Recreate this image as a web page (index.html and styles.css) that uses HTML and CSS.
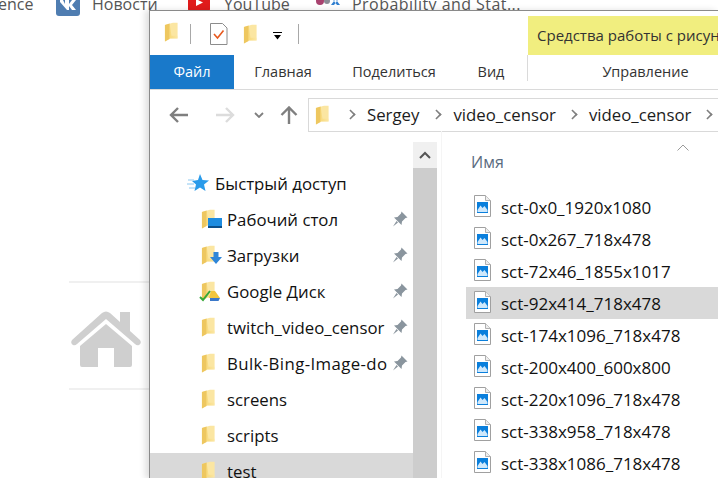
FILE: index.html
```html
<!DOCTYPE html>
<html lang="en">

<head>
  <meta charset="UTF-8">
  <title>video_censor</title>
  <link rel="stylesheet" href="styles.css">
</head>

<body>
  <svg class="defs" width="0" height="0">
    <defs>
      <linearGradient id="fold" x1="0" y1="0" x2="1" y2="0">
        <stop offset="0" stop-color="#f6d365" />
        <stop offset="1" stop-color="#fbe7a6" />
      </linearGradient>
      <symbol id="folder" viewBox="0 0 16 22">
        <path d="M1 3.500 L9.500 1 H14.500 V18 H6 L1 21 Z" fill="#fbe6a2" />
        <path d="M1 3.500 L6 2 V18.500 L1 21 Z" fill="#eec75f" />
        <path d="M6 2 V18 H14.500 V15 H8 Z" fill="url(#fold)" opacity=".6" />
      </symbol>
      <symbol id="pin" viewBox="0 0 16 16">
        <path d="M9.500 0.500 L15.500 6.500 L13.500 7 L10 10.500 L9.500 14 L2 6.500 L5.500 6 L9 2.500 Z M4.500 10 L6 11.500 L1 15.500 Z" fill="#8a959e" />
      </symbol>
      <symbol id="pic" viewBox="0 0 17 22">
        <path d="M0.500 0.500 H11.500 L16.500 5.500 V21.500 H0.500 Z" fill="#fff" stroke="#a0a0a0" />
        <path d="M11.500 0.500 V5.500 H16.500" fill="#eee" stroke="#b0b0b0" />
        <rect x="3" y="7" width="11" height="11" fill="#0a7fdc" />
        <path d="M3.500 15 L6.500 10.500 L8.500 13 L10.500 11 L13.500 15 V17 H3.500 Z" fill="#cfe8fb" />
      </symbol>
    </defs>
  </svg>

  <div class="bookmarks">
    <span class="bm bm-cut">ence</span>
    <span class="bm bm-news">
      <svg class="vk" width="24" height="24" viewBox="0 0 24 24">
        <rect width="24" height="24" rx="3" fill="#4f7db1" />
        <path d="M4 8 H7 L9 12 V8 H13 V12 L16 8 H20 L16 13 L20 18 H16 L13 14 V18 H11 L4 10 Z" fill="#fff" />
      </svg>
      Новости
    </span>
    <span class="bm bm-yt">
      <svg width="22" height="16" viewBox="0 0 22 16">
        <rect width="22" height="16" rx="3" fill="#e01b1b" />
        <path d="M8 3 L15 6.500 L8 10 Z" fill="#fff" />
      </svg>
      YouTube
    </span>
    <span class="bm bm-edx">
      <svg width="26" height="14" viewBox="0 0 26 14">
        <circle cx="5" cy="4" r="4" fill="#a8426f" />
        <circle cx="12" cy="4" r="3" fill="#8b8b95" />
        <path d="M16 0 H19 L25 8 H22 Z M25 0 H22 L16 8 H19 Z" fill="#2f7fd0" />
      </svg>
      Probability and Stat...
    </span>
  </div>

  <div class="home-strip">
    <svg width="72" height="58" viewBox="0 0 72 58">
      <path d="M50 2 H60 V21 L70 30 Q72 33 69 35 Q67 36 65 34 L36 9 L7 34 Q5 36 3 35 Q0 33 2 30 L32 3 Q36 0 40 3 L50 12 Z" fill="#cfcfcf" />
      <path d="M36 14 L62 36 V55 Q62 57 60 57 H44 V38 H28 V57 H12 Q10 57 10 55 V36 Z" fill="#cfcfcf" />
    </svg>
  </div>

  <div class="explorer">
    <div class="qat">
      <svg class="qat-folder" width="15" height="22"><use href="#folder" /></svg>
      <span class="qat-sep"></span>
      <svg class="qat-check" width="18" height="22" viewBox="0 0 18 22">
        <path d="M0.500 0.500 H12.500 L17 5 V21.500 H0.500 Z" fill="#fff" stroke="#8c8c8c" />
        <path d="M4 11 L7.500 15 L13.500 7.500" fill="none" stroke="#e8591e" stroke-width="1.600" />
      </svg>
      <svg class="qat-folder2" width="15" height="22"><use href="#folder" /></svg>
      <svg class="qat-drop" width="9" height="8" viewBox="0 0 9 8">
        <path d="M0 0 H9 V1 H0 Z M1 3 H8 L4.500 7.500 Z" fill="#000" />
      </svg>
      <span class="qat-sep qat-sep-last"></span>
      <div class="tools-head">Средства работы с рисун</div>
    </div>

    <div class="tabs">
      <div class="tab tab-file">Файл</div>
      <div class="tab tab-home">Главная</div>
      <div class="tab tab-share">Поделиться</div>
      <div class="tab tab-view">Вид</div>
      <div class="tab tab-manage">Управление</div>
    </div>

    <div class="addr-row">
      <svg class="nav-btn back" width="20" height="16" viewBox="0 0 20 16">
        <path d="M9 1 L2 8 L9 15 M2 8 H19" fill="none" stroke="#7f7f7f" stroke-width="2.400" />
      </svg>
      <svg class="nav-btn fwd" width="20" height="16" viewBox="0 0 20 16">
        <path d="M11 1 L18 8 L11 15 M18 8 H1" fill="none" stroke="#dcdcdc" stroke-width="2.400" />
      </svg>
      <svg class="nav-btn down" width="10" height="6" viewBox="0 0 10 6">
        <path d="M1 1 L5 5 L9 1" fill="none" stroke="#7f7f7f" stroke-width="1.800" />
      </svg>
      <svg class="nav-btn up" width="18" height="18" viewBox="0 0 18 18">
        <path d="M1.500 9 L9 1.500 L16.500 9 M9 2 V18" fill="none" stroke="#7f7f7f" stroke-width="2.400" />
      </svg>
      <div class="addr-box">
        <svg class="addr-folder" width="15" height="22"><use href="#folder" /></svg>
        <span class="crumb-arrow"></span><span class="crumb crumb-first">Sergey</span>
        <span class="crumb-arrow"></span><span class="crumb">video_censor</span>
        <span class="crumb-arrow"></span><span class="crumb">video_censor</span>
        <span class="crumb-arrow"></span>
      </div>
    </div>

    <div class="panes">
      <div class="nav-pane">
        <div class="nav-item nav-quick">
          <svg class="star" width="22" height="18" viewBox="0 0 22 18">
            <path d="M13 0 L15.500 6 L22 6.500 L17 10.500 L18.500 17 L13 13.500 L7.500 17 L9 10.500 L5 7 L11 6 Z" fill="#2a9bea" />
            <path d="M1 6 H7 M0 10 H7 M2 14 H8" stroke="#8cc8f0" stroke-width="1" />
          </svg>
          Быстрый доступ
        </div>
        <div class="nav-item">
          <span class="ico">
            <svg width="15" height="22"><use href="#folder" /></svg>
            <svg class="badge badge-desk" width="14" height="10" viewBox="0 0 14 10">
              <rect width="14" height="10" fill="#1d8ce0" />
              <rect y="8" width="14" height="2" fill="#0b4f8a" />
            </svg>
          </span>
          <span class="label">Рабочий стол</span>
          <svg class="pin" width="16" height="16"><use href="#pin" /></svg>
        </div>
        <div class="nav-item">
          <span class="ico">
            <svg width="15" height="22"><use href="#folder" /></svg>
            <svg class="badge badge-down" width="12" height="12" viewBox="0 0 12 12">
              <path d="M3.500 0 H8.500 V5 H12 L6 12 L0 5 H3.500 Z" fill="#2f86d8" />
            </svg>
          </span>
          <span class="label">Загрузки</span>
          <svg class="pin" width="16" height="16"><use href="#pin" /></svg>
        </div>
        <div class="nav-item">
          <span class="ico">
            <svg width="15" height="22"><use href="#folder" /></svg>
            <svg class="badge badge-drive" width="22" height="15" viewBox="0 0 22 15">
              <path d="M12 4 H16 L21 11 H10 Z" fill="#f2c53d" />
              <path d="M11 11 H21 L19.500 14 H11 Z" fill="#3b78c9" />
              <path d="M1 10 L4 13 L11 4" fill="none" stroke="#35a83a" stroke-width="2" />
            </svg>
          </span>
          <span class="label">Google Диск</span>
          <svg class="pin" width="16" height="16"><use href="#pin" /></svg>
        </div>
        <div class="nav-item">
          <span class="ico"><svg width="15" height="22"><use href="#folder" /></svg></span>
          <span class="label">twitch_video_censor</span>
          <svg class="pin" width="16" height="16"><use href="#pin" /></svg>
        </div>
        <div class="nav-item">
          <span class="ico"><svg width="15" height="22"><use href="#folder" /></svg></span>
          <span class="label label-wide">Bulk-Bing-Image-do</span>
          <svg class="pin" width="16" height="16"><use href="#pin" /></svg>
        </div>
        <div class="nav-item">
          <span class="ico"><svg width="15" height="22"><use href="#folder" /></svg></span>
          <span class="label">screens</span>
        </div>
        <div class="nav-item">
          <span class="ico"><svg width="15" height="22"><use href="#folder" /></svg></span>
          <span class="label">scripts</span>
        </div>
        <div class="nav-item nav-selected">
          <span class="ico"><svg width="15" height="22"><use href="#folder" /></svg></span>
          <span class="label">test</span>
        </div>
      </div>

      <div class="scrollbar">
        <div class="scroll-up">
          <svg width="12" height="8" viewBox="0 0 12 8">
            <path d="M1 7 L6 2 L11 7" fill="none" stroke="#555" stroke-width="2" />
          </svg>
        </div>
        <div class="scroll-thumb"></div>
      </div>

      <div class="files">
        <svg class="sort-caret" width="12" height="7" viewBox="0 0 12 7">
          <path d="M0.500 6.500 L6 1 L11.500 6.500" fill="none" stroke="#9a9a9a" />
        </svg>
        <div class="col-name">Имя</div>
        <div class="file"><svg width="17" height="22"><use href="#pic" /></svg>sct-0x0_1920x1080</div>
        <div class="file"><svg width="17" height="22"><use href="#pic" /></svg>sct-0x267_718x478</div>
        <div class="file"><svg width="17" height="22"><use href="#pic" /></svg>sct-72x46_1855x1017</div>
        <div class="file file-selected"><svg width="17" height="22"><use href="#pic" /></svg>sct-92x414_718x478</div>
        <div class="file"><svg width="17" height="22"><use href="#pic" /></svg>sct-174x1096_718x478</div>
        <div class="file"><svg width="17" height="22"><use href="#pic" /></svg>sct-200x400_600x800</div>
        <div class="file"><svg width="17" height="22"><use href="#pic" /></svg>sct-220x1096_718x478</div>
        <div class="file"><svg width="17" height="22"><use href="#pic" /></svg>sct-338x958_718x478</div>
        <div class="file"><svg width="17" height="22"><use href="#pic" /></svg>sct-338x1086_718x478</div>
      </div>
    </div>
  </div>
</body>

</html>
```

FILE: styles.css
```css
html,
body {
  margin: 0;
  height: 100%;
  overflow: hidden;
  background: #fff;
}

body {
  position: relative;
  font-family: "Open Sans", "Noto Sans", sans-serif;
  color: #1c1c1c;
}

.defs {
  position: absolute;
}

/* page behind the window */
.bookmarks {
  display: flex;
  align-items: center;
  height: 16px;
  margin-top: -4px;
  font-size: 16px;
  color: #555;
  white-space: nowrap;
}

.bm {
  display: flex;
  align-items: center;
  gap: 12px;
}

.bm-cut {
  margin-left: -2px;
  width: 58px;
}

.bm-news {
  width: 132px;
}

.bm-yt {
  width: 127px;
  gap: 14px;
}

.bm-edx {
  gap: 11px;
  letter-spacing: .45px;
}

.home-strip {
  position: absolute;
  left: 69px;
  top: 281px;
  width: 81px;
  height: 109px;
  box-sizing: border-box;
  border-top: 2px solid #f0f0f0;
  border-bottom: 2px solid #f0f0f0;
  padding: 27px 0 0 1px;
}

/* explorer window */
.explorer {
  position: absolute;
  left: 149px;
  top: 10px;
  width: 569px;
  height: 468px;
  display: flex;
  flex-direction: column;
  background: #fff;
  border-left: 1px solid #8a8a8a;
  border-top: 1px solid #8a8a8a;
  box-shadow: -4px 0 6px rgba(0, 0, 0, .12);
  font-size: 14.500px;
}

.qat {
  display: flex;
  align-items: flex-start;
  height: 44px;
  flex: none;
}

.qat-folder {
  margin: 10px 0 0 14px;
}

.qat-sep {
  width: 1px;
  height: 20px;
  background: #a8a8a8;
  margin: 13px 0 0 11px;
}

.qat-check {
  margin: 12px 0 0 19px;
}

.qat-folder2 {
  margin: 12px 0 0 15px;
}

.qat-drop {
  margin: 21px 0 0 15px;
}

.qat-sep-last {
  margin-left: 16px;
}

.tools-head {
  margin: 5px 0 0 auto;
  width: 191px;
  height: 39px;
  box-sizing: border-box;
  background: #f1ee7f;
  padding-left: 9px;
  line-height: 39px;
  font-size: 15px;
  color: #333;
  white-space: nowrap;
  overflow: hidden;
}

.tabs {
  display: flex;
  height: 34px;
  flex: none;
  border-bottom: 1px solid #dadada;
  color: #333;
}

.tab {
  line-height: 34px;
  text-align: center;
  white-space: nowrap;
}

.tab-file {
  width: 84px;
  background: #1979ca;
  color: #fff;
}

.tab-home {
  width: 98px;
}

.tab-share {
  width: 124px;
}

.tab-view {
  width: 70px;
}

.tab-manage {
  flex: 1;
  padding-left: 44px;
  border-left: 1px solid #dadada;
  margin: 0 0 8px 1px;
  height: 26px;
}

.addr-row {
  display: flex;
  align-items: center;
  height: 41px;
  flex: none;
  box-sizing: border-box;
  padding-top: 8px;
}

.nav-btn {
  flex: none;
}

.back {
  margin-left: 19px;
}

.fwd {
  margin-left: 26px;
}

.down {
  margin-left: 19px;
}

.up {
  margin-left: 16px;
}

.addr-box {
  flex: 1;
  display: flex;
  align-items: center;
  height: 32px;
  margin-left: 10px;
  border: 1px solid #d9d9d9;
  border-right: 0;
  font-size: 16.800px;
  white-space: nowrap;
  overflow: hidden;
}

.addr-folder {
  margin-left: 6px;
  flex: none;
}

.crumb-arrow {
  flex: none;
  width: 7px;
  height: 7px;
  border-top: 2px solid #7f7f7f;
  border-right: 2px solid #7f7f7f;
  transform: rotate(45deg) scale(.8);
  margin: 0 12px 0 12px;
}

.addr-folder + .crumb-arrow {
  margin-left: 16px;
}

.crumb-first {
  margin-right: 1px;
}

.panes {
  flex: 1;
  display: flex;
  min-height: 0;
  font-size: 16.800px;
}

.nav-pane {
  width: 263px;
  flex: none;
  box-sizing: border-box;
  padding-top: 34px;
  overflow: hidden;
}

.nav-item {
  display: flex;
  align-items: center;
  height: 36px;
  white-space: nowrap;
  color: #111;
}

.nav-quick {
  padding-left: 37px;
  gap: 6px;
}

.star {
  flex: none;
}

.ico {
  position: relative;
  display: flex;
  flex: none;
  width: 26px;
  margin-left: 51px;
}

.badge {
  position: absolute;
}

.badge-desk {
  left: 7px;
  top: 10px;
}

.badge-down {
  left: 9px;
  top: 8px;
}

.badge-drive {
  left: -2px;
  top: 7px;
}

.label {
  flex: none;
  width: 161px;
  overflow: hidden;
}

.label-wide {
  letter-spacing: .4px;
}

.pin {
  flex: none;
  margin-left: 4px;
}

.nav-selected {
  background: #d9d9d9;
}

.scrollbar {
  width: 24px;
  flex: none;
  margin-top: 11px;
  display: flex;
  flex-direction: column;
}

.scroll-up {
  height: 26px;
  background: #f0f0f0;
  display: flex;
  align-items: center;
  justify-content: center;
}

.scroll-thumb {
  flex: 1;
  background: #cdcdcd;
}

.files {
  position: relative;
  flex: 1;
  margin-left: 4px;
  padding-left: 24px;
  border-left: 1px solid #f5f5f5;
}

.sort-caret {
  position: absolute;
  left: 235px;
  top: 13px;
}

.col-name {
  height: 60px;
  box-sizing: border-box;
  padding: 20px 0 0 5px;
  font-size: 16px;
  color: #5a6b80;
}

.file {
  display: flex;
  align-items: center;
  gap: 10px;
  height: 32px;
  padding-left: 8px;
  font-size: 17px;
  white-space: nowrap;
  color: #111;
}

.file svg {
  margin-top: -2px;
}

.file-selected {
  background: #d9d9d9;
}
```
